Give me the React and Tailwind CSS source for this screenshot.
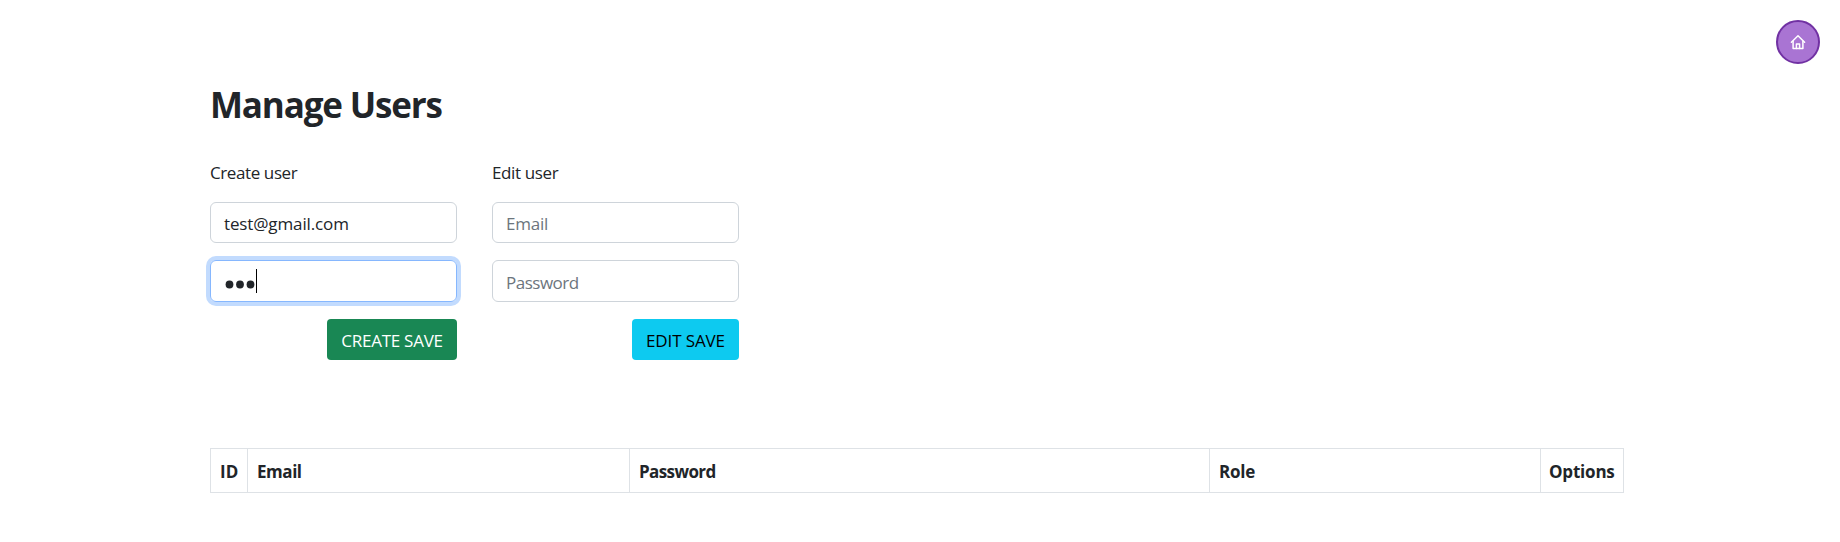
import React from "react";

const inputBase =
  "block w-[247px] rounded-[6px] border border-[#ced4da] bg-white px-[13px] pt-[2px] text-[17px] text-[#212529] placeholder:text-[#6c757d] outline-none";

const cell = "h-[43px] border-l border-[#dee2e6] leading-[46px]";

function HomeIcon() {
  return (
    <svg width="16" height="16" viewBox="0 0 16 16" fill="none" stroke="#fff" strokeWidth="1.5" strokeLinecap="round" strokeLinejoin="round">
      <path d="M1.4 8.3 8 1.7l6.6 6.6" />
      <path d="M3.1 7.2v7.4h9.8V7.2" />
      <path d="M6.4 14.4V10h3.2v4.4" />
    </svg>
  );
}

function MaskedValue() {
  return (
    <svg width="31" height="24" viewBox="0 0 31 24" fill="#212529">
      <circle cx="4.5" cy="15.5" r="3.9" />
      <circle cx="15" cy="15.5" r="3.9" />
      <circle cx="25.5" cy="15.5" r="3.9" />
    </svg>
  );
}

export default function App() {
  return (
    <div className="relative h-[542px] w-[1840px] overflow-hidden bg-white pl-[210px] font-['Open_Sans',sans-serif] text-[17px] text-[#212529]">
      <button aria-label="Home" className="absolute left-[1776px] top-[20px] flex size-[44px] items-center justify-center rounded-full border-2 border-[#7131a3] bg-[#a974d3]">
        <HomeIcon />
      </button>

      <h1 className="pt-[84px] text-[35px] font-bold leading-[42px] tracking-[-1.15px]">Manage Users</h1>

      <div className="mt-[34px] flex gap-[35px]">
        <section className="w-[247px]">
          <p className="h-[42px] leading-[26px] tracking-[-0.4px]">Create user</p>
          <div className="flex h-[41px] items-center rounded-[6px] border border-[#ced4da] px-[13px] pt-[2px] tracking-[-0.13px]">
            test@gmail.com
          </div>
          <div className="mt-[17px] flex h-[42px] items-center rounded-[6px] border border-[#86b7fe] pl-[14px] shadow-[0_0_0_4px_#c2dbfe]">
            <MaskedValue />
            <i className="h-[24px] w-px bg-black" />
          </div>
          <div className="mt-[17px] flex justify-end">
            <button className="h-[41px] w-[130px] rounded-[4px] bg-[#198754] pt-[2px] tracking-[-0.25px] text-white">CREATE SAVE</button>
          </div>
        </section>
        <section className="w-[247px]">
          <p className="h-[42px] leading-[26px] tracking-[-0.38px]">Edit user</p>
          <input className={`${inputBase} h-[41px] tracking-[-0.2px]`} placeholder="Email" />
          <input className={`${inputBase} mt-[17px] h-[42px] tracking-[-0.5px]`} placeholder="Password" />
          <div className="mt-[17px] flex justify-end">
            <button className="h-[41px] w-[107px] rounded-[4px] bg-[#0dcaf0] pt-[2px] tracking-[-0.12px] text-black">EDIT SAVE</button>
          </div>
        </section>
      </div>

      <div className="mt-[88px] grid h-[45px] w-[1414px] grid-cols-[37px_382px_580px_331px_84px] border-y border-r border-[#dee2e6] font-bold">
        <div className={`${cell} pl-[9px]`}>ID</div>
        <div className={`${cell} pl-[9px] tracking-[-0.45px]`}>Email</div>
        <div className={`${cell} pl-[9px] tracking-[-0.6px]`}>Password</div>
        <div className={`${cell} pl-[9px] tracking-[-0.2px]`}>Role</div>
        <div className={`${cell} pl-[8px] tracking-[-0.2px]`}>Options</div>
      </div>
    </div>
  );
}
